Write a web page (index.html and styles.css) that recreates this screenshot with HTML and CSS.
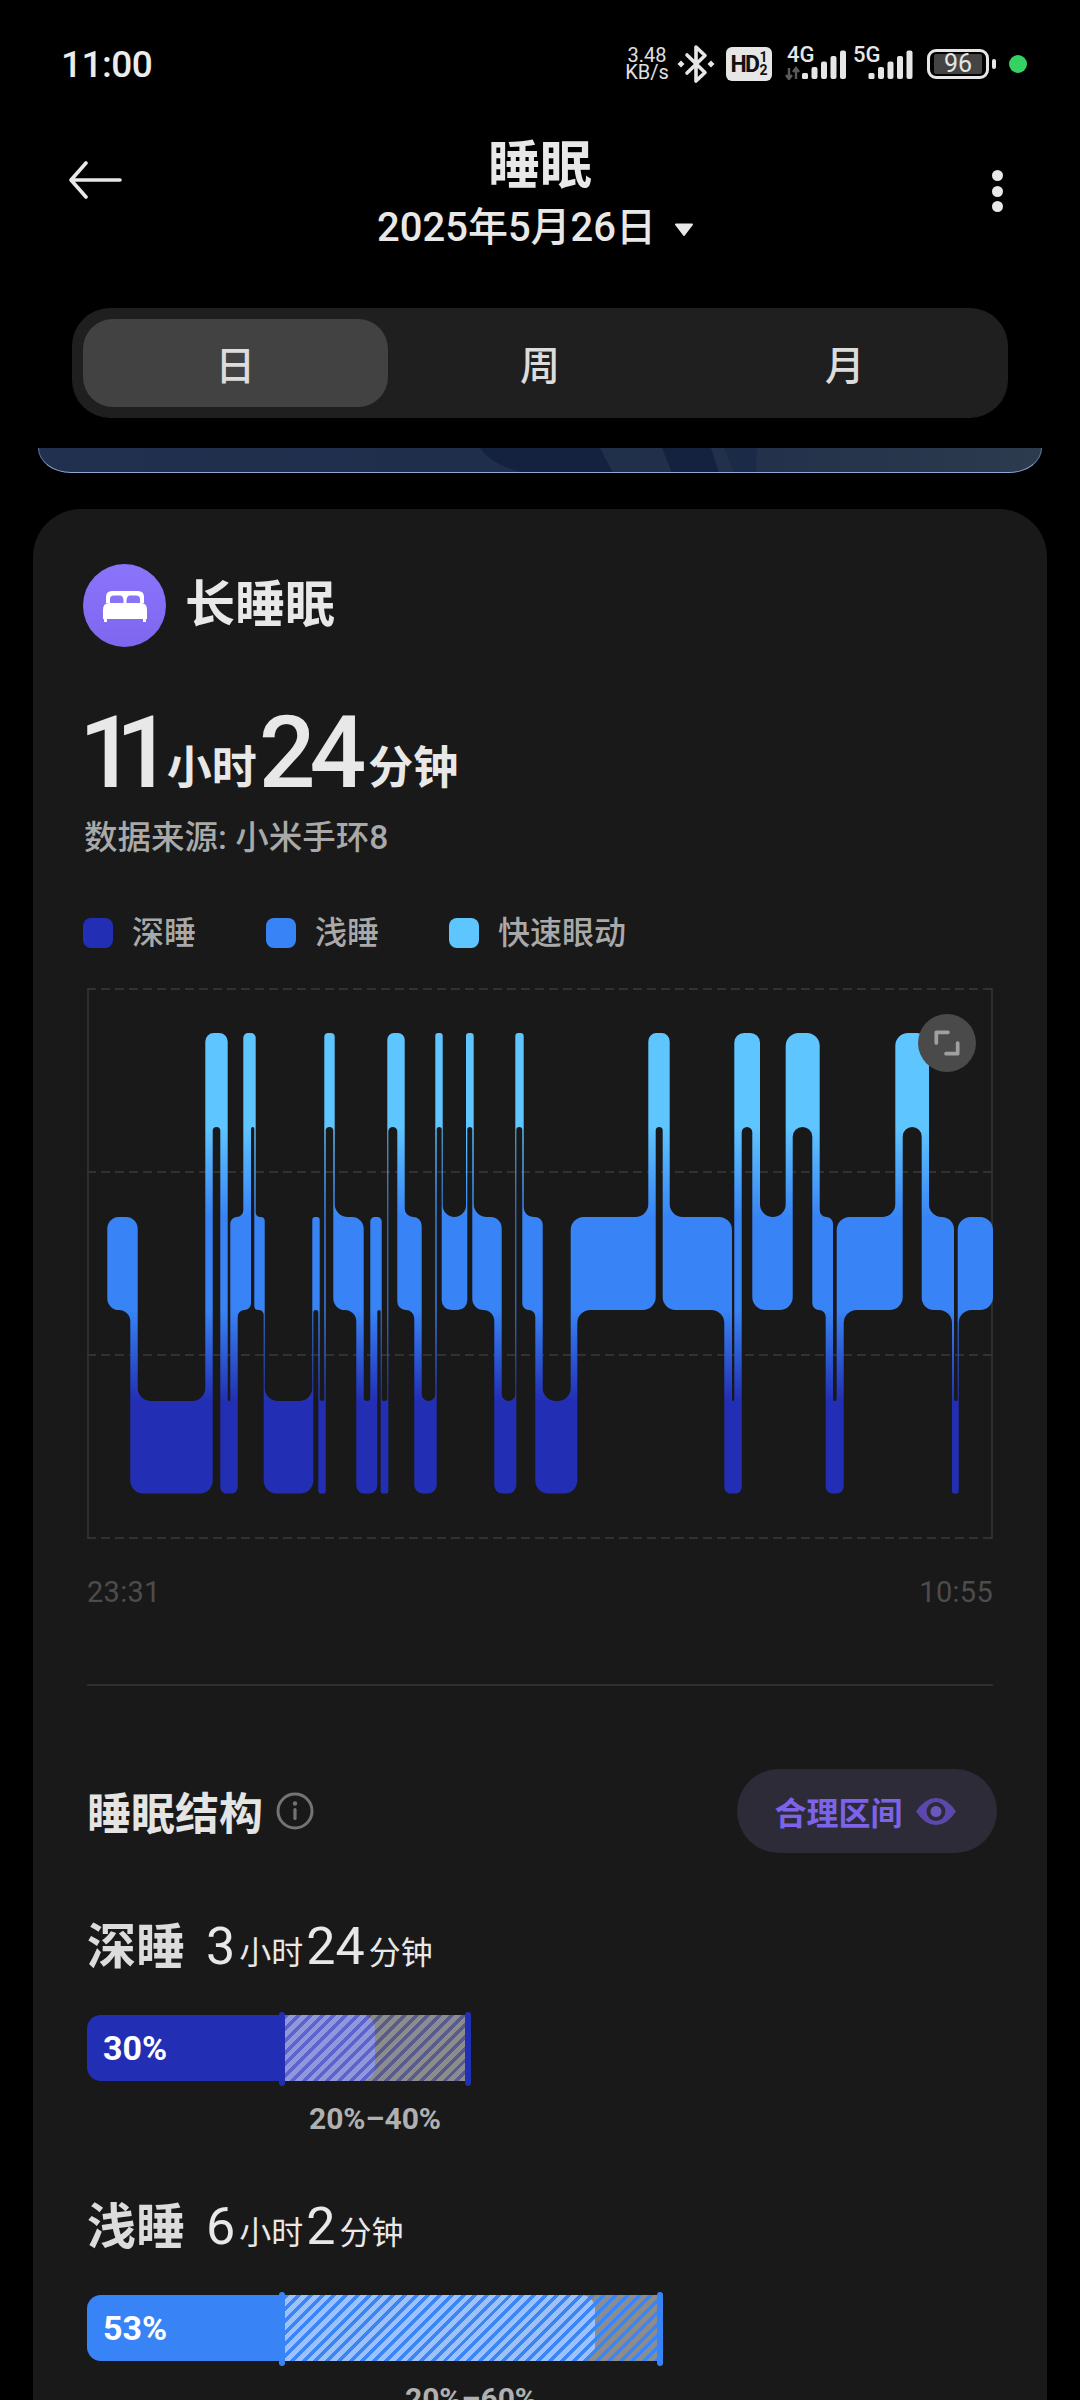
FILE: index.html
```html
<!DOCTYPE html>
<html lang="zh-CN">
<head>
    <meta charset="UTF-8">
    <meta name="viewport" content="width=device-width, initial-scale=1.0">
    <title>睡眠</title>
    <link rel="stylesheet" href="styles.css">
</head>
<body>
    <div class="status">
        <span class="clock">11:00</span>
        <div class="status-icons">
            <div class="speed"><span>3.48</span><span>KB/s</span></div>
            <svg class="bt" width="36" height="40" viewBox="0 0 36 40">
                <path d="M9 11 L27 28.5 L18 37 V3 L27 11.5 L9 29" fill="none" stroke="#e6e6e6" stroke-width="3.6" stroke-linejoin="round" stroke-linecap="round"/>
                <path d="M3 16.5 L6.5 20 L3 23.5 L-.5 20 Z M33 16.5 L36.5 20 L33 23.5 L29.5 20 Z" fill="#e6e6e6"/>
            </svg>
            <div class="hd"><span>HD</span><span class="hd-sim"><i>1</i><i>2</i></span></div>
            <svg class="net net-4g" width="62" height="38" viewBox="0 -4 62 38">
                <text x="3" y="15.500" class="net-text">4G</text>
                <path d="M5 22 V33 M2 29 L5 33 L8 29 M12 33 V22 M9 26 L12 22 L15 26" fill="none" stroke="#5a5a5a" stroke-width="2.400"/>
                <rect x="18" y="27" width="6" height="6" rx="1.5" fill="#e6e6e6"/>
                <rect x="27.5" y="21" width="6" height="12" rx="2" fill="#e6e6e6"/>
                <rect x="37" y="15.5" width="6" height="17.5" rx="2" fill="#e6e6e6"/>
                <rect x="46.5" y="10" width="6" height="23" rx="2" fill="#e6e6e6"/>
                <rect x="56" y="4.5" width="6" height="28.5" rx="2" fill="#e6e6e6"/>
            </svg>
            <svg class="net" width="60" height="38" viewBox="0 -4 60 38">
                <text x="0" y="15.500" class="net-text">5G</text>
                <rect x="15.5" y="27" width="6" height="6" rx="1.5" fill="#e6e6e6"/>
                <rect x="25" y="21" width="6" height="12" rx="2" fill="#e6e6e6"/>
                <rect x="34.5" y="15.5" width="6" height="17.5" rx="2" fill="#e6e6e6"/>
                <rect x="44" y="10" width="6" height="23" rx="2" fill="#e6e6e6"/>
                <rect x="53.5" y="4.5" width="6" height="28.5" rx="2" fill="#e6e6e6"/>
            </svg>
            <div class="battery">
                <div class="battery-body"><span>96</span></div>
                <div class="battery-nub"></div>
            </div>
            <div class="dot-green"></div>
        </div>
    </div>

    <header class="topbar">
        <svg class="back" width="54" height="38" viewBox="0 0 54 38">
            <path d="M52 19 H3 M18 2 L3 19 L18 36" fill="none" stroke="#e8e8e8" stroke-width="3.6" stroke-linecap="round" stroke-linejoin="round"/>
        </svg>
        <div class="title-block">
            <h1>睡眠</h1>
            <div class="date">2025年5月26日
                <svg width="20" height="13" viewBox="0 0 20 13"><path d="M2 1.5 H18 L10 12 Z" fill="#e8e8e8" stroke="#e8e8e8" stroke-width="2" stroke-linejoin="round"/></svg>
            </div>
        </div>
        <div class="more"><i></i><i></i><i></i></div>
    </header>

    <nav class="tabs">
        <div class="tab active">日</div>
        <div class="tab">周</div>
        <div class="tab">月</div>
    </nav>

    <div class="banner">
        <svg width="1004" height="25" viewBox="0 0 1004 25">
            <path d="M441 0 C450 12 466 22 490 25 H574 L561 0 Z" fill="#14223f"/>
            <path d="M623 0 L633 25 H680 L672 0 Z" fill="#14223f"/>
            <path d="M685 0 L695 25 H717 L718 0 Z" fill="#1b2b47"/>
        </svg>
    </div>

    <main class="card">
        <div class="card-head">
            <div class="bed-icon">
                <svg width="46" height="32" viewBox="0 0 46 32">
                    <path d="M4 13 V7 Q4 1 10 1 H36 Q42 1 42 7 V13 Z" fill="#fff"/>
                    <path d="M8 13 V9 Q8 5.500 12 5.500 H18 Q21 5.500 21.500 10 V13 Z M38 13 V9 Q38 5.500 34 5.500 H28 Q25 5.500 24.500 10 V13 Z" fill="#8a72fa"/>
                    <path d="M7 13 H39 Q45 13 45 20 V29 H1 V20 Q1 13 7 13 Z M2 29 H5 V32 H2 Z M41 29 H44 V32 H41 Z" fill="#fff"/>
                </svg>
            </div>
            <h2>长睡眠</h2>
        </div>

        <div class="total">
            <span class="big big-ones">11</span><span class="unit">小时</span><span class="big">24</span><span class="unit">分钟</span>
        </div>
        <div class="source">数据来源: 小米手环8</div>

        <div class="legend">
            <div class="legend-item"><i class="swatch deep"></i>深睡</div>
            <div class="legend-item"><i class="swatch light"></i>浅睡</div>
            <div class="legend-item"><i class="swatch rem"></i>快速眼动</div>
        </div>

        <div class="chart">
            <svg width="906" height="551" viewBox="0 0 906 551">
                <defs>
                    <linearGradient id="sleep-fill" gradientUnits="userSpaceOnUse" x1="0" y1="0" x2="0" y2="551">
                        <stop offset="0.252" stop-color="#5fc5ff"/>
                        <stop offset="0.416" stop-color="#3884f6"/>
                        <stop offset="0.584" stop-color="#3884f6"/>
                        <stop offset="0.75" stop-color="#222fb5"/>
                    </linearGradient>
                </defs>
                <g class="grid-lines">
                    <line x1="0" y1="1" x2="906" y2="1"/>
                    <line x1="0" y1="184" x2="906" y2="184"/>
                    <line x1="0" y1="367" x2="906" y2="367"/>
                    <line x1="0" y1="550" x2="906" y2="550"/>
                </g>
                <g class="grid-sides">
                    <line x1="1" y1="0" x2="1" y2="551"/>
                    <line x1="905" y1="0" x2="905" y2="551"/>
                </g>
                <path id="sleep-path" fill="url(#sleep-fill)"/>
            </svg>
            <div class="expand">
                <svg width="26" height="26" viewBox="0 0 28 28">
                    <path d="M2.500 14 V2.500 H15 M25.500 14 V25.500 H13" fill="none" stroke="#a0a0a0" stroke-width="4" stroke-linecap="round" stroke-linejoin="round"/>
                </svg>
            </div>
        </div>
        <div class="axis"><span>23:31</span><span>10:55</span></div>

        <div class="divider"></div>

        <div class="section-head">
            <div class="section-title">
                <h3>睡眠结构</h3>
                <svg width="38" height="38" viewBox="0 0 38 38">
                    <circle cx="19" cy="19" r="17" fill="none" stroke="#737373" stroke-width="3"/>
                    <circle cx="19" cy="11.500" r="2.200" fill="#737373"/>
                    <rect x="17.400" y="16" width="3.200" height="12" rx="1.600" fill="#737373"/>
                </svg>
            </div>
            <div class="range-pill">
                合理区间
                <svg width="40" height="27" viewBox="0 0 40 27">
                    <path d="M0 13.500 Q9 0 20 0 Q31 0 40 13.500 Q31 27 20 27 Q9 27 0 13.500 Z" fill="#5c48ad"/>
                    <circle cx="20" cy="13.500" r="9.500" fill="#2e2b38"/>
                    <circle cx="20" cy="13.500" r="5.500" fill="#6b58bd"/>
                </svg>
            </div>
        </div>

        <section class="stage stage-deep">
            <div class="stage-title">
                <span class="stage-name">深睡</span>
                <span class="num">3</span><span class="small-unit">小时</span><span class="num">24</span><span class="small-unit">分钟</span>
            </div>
            <div class="bar">
                <div class="bar-fill" style="width: 288px">30%</div>
                <div class="bar-range" style="width: 180px"></div>
                <i class="tick tick-start"></i>
                <i class="tick" style="left: 378px"></i>
            </div>
            <div class="range-label" style="width: 192px">20%–40%</div>
        </section>

        <section class="stage stage-light">
            <div class="stage-title">
                <span class="stage-name">浅睡</span>
                <span class="num">6</span><span class="small-unit">小时</span><span class="num">2</span><span class="small-unit">分钟</span>
            </div>
            <div class="bar">
                <div class="bar-fill" style="width: 508px">53%</div>
                <div class="bar-range" style="width: 372px"></div>
                <i class="tick tick-start"></i>
                <i class="tick" style="left: 570px"></i>
            </div>
            <div class="range-label" style="width: 384px">20%–60%</div>
        </section>
    </main>

    <script src="chart.js"></script>
</body>
</html>
```

FILE: styles.css
```css
* {
    box-sizing: border-box;
}

html, body {
    margin: 0;
    padding: 0;
}

body {
    width: 1080px;
    height: 2400px;
    overflow: hidden;
    background-color: #000;
    color: #e8e8e8;
    font-family: Roboto, "Noto Sans CJK SC", sans-serif;
}

h1, h2, h3 {
    margin: 0;
}

i {
    font-style: normal;
}

/* status bar */
.status {
    height: 128px;
    display: flex;
    justify-content: space-between;
    align-items: center;
    padding: 0 53px 0 61px;
}

.clock {
    font-size: 37px;
    font-weight: 500;
    letter-spacing: -0.5px;
    color: #ececec;
}

.status-icons {
    display: flex;
    align-items: center;
}

.speed {
    width: 44px;
    display: flex;
    flex-direction: column;
    align-items: center;
    font-size: 20px;
    line-height: 17px;
    color: #e0e0e0;
}

.bt {
    margin-left: 9px;
    overflow: visible;
}

.hd {
    width: 46px;
    height: 34px;
    margin-left: 12px;
    display: flex;
    align-items: center;
    justify-content: center;
    gap: 1px;
    background-color: #e6e6e6;
    border-radius: 6px;
    color: #111;
    font-size: 23px;
    font-weight: 700;
    letter-spacing: -1.5px;
}

.hd-sim {
    display: flex;
    flex-direction: column;
    font-size: 14px;
    line-height: 13px;
    letter-spacing: 0;
}

.net {
    margin-left: 12px;
    margin-bottom: 6px;
}

.net-text {
    font-size: 22px;
    font-weight: 500;
    fill: #e6e6e6;
}

.net + .net {
    margin-left: 7px;
}

.battery {
    margin-left: 14px;
    display: flex;
    align-items: center;
    gap: 3px;
}

.battery-body {
    width: 62px;
    height: 30px;
    padding: 2px 4px;
    border: 3px solid #e6e6e6;
    border-radius: 9px;
}

.battery-body span {
    display: block;
    height: 100%;
    background-color: #444;
    border-radius: 2px;
    color: #e4e4e4;
    font-size: 25px;
    line-height: 20px;
    text-align: center;
}

.battery-nub {
    width: 4px;
    height: 10px;
    background-color: #e6e6e6;
    border-radius: 2px;
}

.dot-green {
    width: 18px;
    height: 18px;
    margin-left: 13px;
    background-color: #34d163;
    border-radius: 50%;
}

/* header */
.topbar {
    height: 122px;
    margin-top: 8px;
    padding: 0 77px 0 68px;
    display: grid;
    grid-template-columns: 1fr auto 1fr;
}

.back {
    margin-top: 25px;
}

.title-block {
    text-align: center;
}

.title-block h1 {
    padding-left: 9px;
    font-size: 52px;
    line-height: 62px;
    font-weight: 700;
}

.date {
    font-size: 40px;
    font-weight: 500;
    line-height: 60px;
    white-space: nowrap;
}

.date svg {
    margin-left: 8px;
    vertical-align: 5px;
}

.more {
    width: 11px;
    margin-top: 34px;
    justify-self: end;
    display: flex;
    flex-direction: column;
    gap: 4.500px;
}

.more i {
    width: 11px;
    height: 11px;
    background-color: #e8e8e8;
    border-radius: 50%;
}

/* day / week / month */
.tabs {
    width: 936px;
    height: 110px;
    margin: 50px 0 0 72px;
    padding: 11px;
    display: grid;
    grid-template-columns: repeat(3, 1fr);
    background-color: #1f1f1f;
    border-radius: 38px;
}

.tab {
    display: flex;
    align-items: center;
    justify-content: center;
    font-size: 40px;
    font-weight: 500;
    color: #dcdcdc;
    border-radius: 30px;
}

.tab.active {
    background-color: #424242;
}

/* card scrolled under the header */
.banner {
    width: 1004px;
    height: 25px;
    margin: 30px 0 0 38px;
    overflow: hidden;
    background: linear-gradient(90deg, #20304e 0%, #1f2e4b 45%, #22304a 70%, #2d3b4f 100%);
    border: 1px solid #5f7aa8;
    border-top: none;
    border-bottom: 1.500px solid #8ea8d4;
    border-radius: 0 0 33px 33px / 0 0 25px 25px;
}

.banner svg {
    display: block;
}

/* main card */
.card {
    width: 1014px;
    height: 2000px;
    margin: 36px 0 0 33px;
    padding: 55px 54px 0 50px;
    background-color: #191919;
    border-radius: 48px;
}

.card-head {
    display: flex;
    align-items: center;
    gap: 19px;
}

.bed-icon {
    width: 83px;
    height: 83px;
    display: flex;
    align-items: center;
    justify-content: center;
    background: linear-gradient(180deg, #8b74fc, #7f66ee);
    border-radius: 50%;
}

.card-head h2 {
    font-size: 50px;
    font-weight: 700;
    line-height: 83px;
    color: #e8e8e8;
}

.total {
    height: 100px;
    margin-top: 56px;
    line-height: 100px;
    white-space: nowrap;
}

.big {
    font-size: 100px;
    font-weight: 500;
    letter-spacing: -6px;
    color: #e8e8e8;
}

.big-ones {
    letter-spacing: -20px;
    margin-left: -4px;
    margin-right: 8px;
}

.unit {
    font-size: 45px;
    font-weight: 600;
    margin: 0 6px;
    vertical-align: 3px;
}

.big + .unit {
    margin-left: 8px;
}

.big-ones + .unit {
    margin-left: 6px;
    margin-right: 2px;
}

.source {
    margin: 13px 0 0 1px;
    font-size: 33.500px;
    font-weight: 500;
    line-height: 44px;
    color: #a9a9a9;
}

.legend {
    margin-top: 58px;
    display: flex;
    gap: 70px;
}

.legend-item {
    display: flex;
    align-items: center;
    gap: 19px;
    font-size: 32px;
    font-weight: 500;
    line-height: 30px;
    color: #a9a9a9;
}

.swatch {
    width: 30px;
    height: 30px;
    border-radius: 8px;
}

.swatch.deep {
    background-color: #222fb5;
}

.swatch.light {
    background-color: #3884f6;
}

.swatch.rem {
    background-color: #5fc5ff;
}

.chart {
    position: relative;
    width: 906px;
    height: 551px;
    margin: 40px 0 0 4px;
}

.chart svg {
    display: block;
}

.grid-lines line {
    stroke: #3a3a3a;
    stroke-width: 1.500;
    stroke-dasharray: 9 5;
}

.grid-sides line {
    stroke: #343434;
    stroke-width: 1.500;
}

.expand {
    position: absolute;
    left: 831px;
    top: 26px;
    width: 58px;
    height: 58px;
    display: flex;
    align-items: center;
    justify-content: center;
    background-color: #4a4a4a;
    border-radius: 50%;
}

.axis {
    width: 906px;
    margin: 35px 0 0 4px;
    display: flex;
    justify-content: space-between;
    font-size: 29px;
    line-height: 36px;
    letter-spacing: 0.3px;
    color: #4c4c4c;
}

.divider {
    width: 906px;
    height: 2px;
    margin: 74px 0 0 4px;
    background-color: #2e2e2e;
}

.section-head {
    width: 910px;
    margin: 83px 0 0 4px;
    display: flex;
    justify-content: space-between;
    align-items: center;
}

.section-title {
    display: flex;
    align-items: center;
    gap: 13px;
}

.section-title h3 {
    font-size: 44px;
    font-weight: 700;
    color: #e4e4e4;
}

.range-pill {
    width: 260px;
    height: 84px;
    display: flex;
    align-items: center;
    justify-content: center;
    gap: 13px;
    padding-right: 4px;
    background-color: #2e2b38;
    border-radius: 42px;
    color: #7d62ea;
    font-size: 32px;
    font-weight: 700;
}

/* sleep stages */
.stage {
    margin: 64px 0 0 4px;
}

.stage + .stage {
    margin-top: 60px;
}

.stage-deep {
    --stage: #222fb5;
    --stripe: rgba(130, 135, 220, 0.6);
}

.stage-light {
    --stage: #3884f6;
    --stripe: #3b85f7;
}

.stage-title {
    height: 60px;
    display: flex;
    align-items: baseline;
    line-height: 60px;
    color: #e8e8e8;
    white-space: nowrap;
}

.stage-name {
    font-size: 49px;
    font-weight: 700;
    color: #dcdcdc;
    margin-right: 21px;
}

.num {
    font-size: 52px;
}

.small-unit {
    font-size: 32px;
    margin: 0 3px 0 4px;
}

.bar {
    position: relative;
    height: 66px;
    margin-top: 38px;
}

.bar-fill {
    height: 66px;
    padding-left: 16px;
    background-color: var(--stage);
    border-radius: 14px;
    color: #fff;
    font-size: 34px;
    font-weight: 700;
    line-height: 66px;
}

.bar-range {
    position: absolute;
    left: 198px;
    top: 0;
    height: 66px;
    background: repeating-linear-gradient(135deg, var(--stripe) 0 3.500px, rgba(255, 255, 255, 0.5) 3.500px 8.300px);
}

.tick {
    position: absolute;
    top: -3px;
    width: 6px;
    height: 74px;
    background-color: var(--stage);
    border-radius: 3px;
}

.tick-start {
    left: 192px;
}

.range-label {
    margin: 20px 0 0 192px;
    font-size: 30px;
    font-weight: 700;
    line-height: 36px;
    text-align: center;
    color: #b0b0b0;
}
```

FILE: chart.js
```js
// sleep stages as bands in the chart: top and bottom y of each
const BANDS = {
    R: { rank: 0, top: 45, bottom: 139 },
    L: { rank: 1, top: 229, bottom: 322 },
    D: { rank: 2, top: 413, bottom: 505.6 }
};

// stage, x start, x end
const SEGMENTS = [
    ['L', 20.3, 50.7], ['D', 43.3, 125.7], ['R', 118.3, 140.7], ['D', 133.3, 150.7],
    ['L', 143.3, 164], ['R', 156.3, 168.7], ['L', 167.3, 177.7], ['D', 176.7, 226.3],
    ['L', 225.3, 232.7], ['D', 231.3, 238.7], ['R', 237.3, 247.7], ['L', 246.3, 276.7],
    ['D', 269.3, 290.3], ['L', 283.3, 294.7], ['D', 293.7, 301.3], ['R', 300.3, 317.7],
    ['L', 310.3, 334.7], ['D', 327.3, 349.7], ['R', 348.3, 355.7], ['L', 354.7, 380.3],
    ['R', 379, 386.7], ['L', 385.3, 414.7], ['D', 407.3, 429.3], ['R', 428.3, 436.7],
    ['L', 435.3, 455.7], ['D', 448.3, 490.3], ['L', 483.7, 568.7], ['R', 561.3, 582.7],
    ['L', 575.7, 645], ['D', 637.3, 654.7], ['R', 647.3, 673], ['L', 665.3, 705.7],
    ['R', 698.7, 732.7], ['L', 725.3, 746], ['D', 738.7, 756.7], ['L', 749.7, 815.7],
    ['R', 808.3, 842], ['L', 834.7, 867], ['D', 865, 871.7], ['L', 870.7, 906]
].map(([stage, x0, x1]) => ({ band: BANDS[stage], x0, x1 }));

const RADIUS = 13;

// concave corner where a free band edge meets a connector
function fillet(cx, cy, dx, dy, r) {
    if (r <= 0) return '';
    const ex = cx + dx * r;
    const ey = cy + dy * r;
    if (dx * dy < 0) {
        return `M${ex} ${cy}L${cx} ${cy}L${cx} ${ey}A${r} ${r} 0 0 0 ${ex} ${cy}Z`;
    }
    return `M${cx} ${ey}L${cx} ${cy}L${ex} ${cy}A${r} ${r} 0 0 0 ${cx} ${ey}Z`;
}

function buildPath() {
    let d = '';

    SEGMENTS.forEach((seg, i) => {
        const prev = SEGMENTS[i - 1];
        const next = SEGMENTS[i + 1];
        const { top, bottom, rank } = seg.band;
        const { x0, x1 } = seg;
        const width = x1 - x0;

        const prevUp = prev && prev.band.rank < rank;
        const prevDown = prev && prev.band.rank > rank;
        const nextUp = next && next.band.rank < rank;
        const nextDown = next && next.band.rank > rank;

        const topFree = (nextUp ? next.x0 : x1) - (prevUp ? prev.x1 : x0);
        const bottomFree = (nextDown ? next.x0 : x1) - (prevDown ? prev.x1 : x0);

        const convex = free => Math.max(0, Math.min(RADIUS, width * 0.38, free / 2));
        const tl = prevUp ? 0 : convex(topFree);
        const tr = nextUp ? 0 : convex(topFree);
        const bl = prevDown ? 0 : convex(bottomFree);
        const br = nextDown ? 0 : convex(bottomFree);

        d += `M${x0 + tl} ${top}H${x1 - tr}A${tr} ${tr} 0 0 1 ${x1} ${top + tr}`;
        d += `V${bottom - br}A${br} ${br} 0 0 1 ${x1 - br} ${bottom}`;
        d += `H${x0 + bl}A${bl} ${bl} 0 0 1 ${x0} ${bottom - bl}`;
        d += `V${top + tl}A${tl} ${tl} 0 0 1 ${x0 + tl} ${top}Z`;

        const topR = Math.min(RADIUS, topFree / 2);
        const bottomR = Math.min(RADIUS, bottomFree / 2);
        if (nextDown) d += fillet(next.x0, bottom, -1, 1, bottomR);
        if (prevDown) d += fillet(prev.x1, bottom, 1, 1, bottomR);
        if (nextUp) d += fillet(next.x0, top, -1, -1, topR);
        if (prevUp) d += fillet(prev.x1, top, 1, -1, topR);

        // connector to the next stage
        if (next) {
            const upper = rank < next.band.rank ? seg.band : next.band;
            const lower = rank < next.band.rank ? next.band : seg.band;
            d += `M${next.x0} ${upper.bottom}H${x1}V${lower.top}H${next.x0}Z`;
        }
    });

    document.getElementById('sleep-path').setAttribute('d', d);
}

buildPath();
```
